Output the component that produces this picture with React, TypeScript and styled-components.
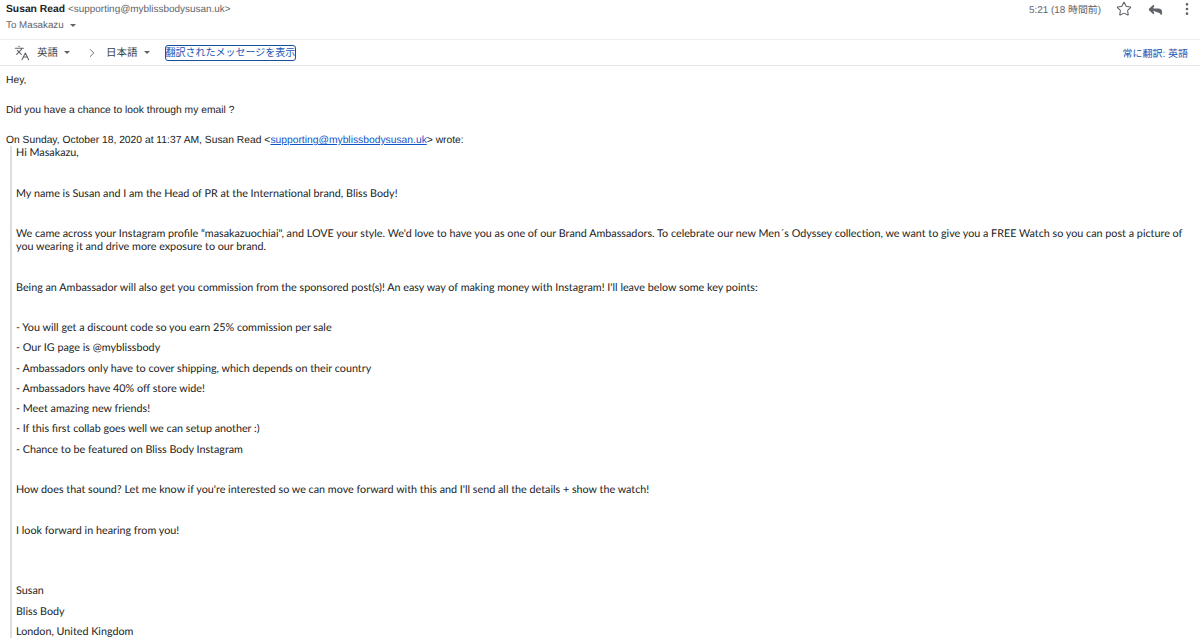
import styled, { createGlobalStyle } from 'styled-components';
import { Languages, ChevronRight, Star, Reply, MoreVertical } from 'lucide-react';

const GlobalStyle = createGlobalStyle`
  html, body {
    margin: 0;
    padding: 0;
    background: #fff;
    overflow: hidden;
    text-rendering: geometricPrecision;
  }
`;

const quoted = [
  'Hi Masakazu,',
  '',
  'My name is Susan and I am the Head of PR at the International brand, Bliss Body!',
  '',
  'We came across your Instagram profile “masakazuochiai", and LOVE your style. We\'d love to have you as one of our Brand Ambassadors. To celebrate our new Men´s Odyssey collection, we want to give you a FREE Watch so you can post a picture of you wearing it and drive more exposure to our brand.',
  '',
  "Being an Ambassador will also get you commission from the sponsored post(s)! An easy way of making money with Instagram! I'll leave below some key points:",
  '',
  '- You will get a discount code so you earn 25% commission per sale',
  '- Our IG page is @myblissbody',
  '- Ambassadors only have to cover shipping, which depends on their country',
  '- Ambassadors have 40% off store wide!',
  '- Meet amazing new friends!',
  '- If this first collab goes well we can setup another :)',
  '- Chance to be featured on Bliss Body Instagram',
  '',
  "How does that sound? Let me know if you're interested so we can move forward with this and I'll send all the details + show the watch!",
  '',
  'I look forward in hearing from you!',
  '',
  '',
  'Susan',
  'Bliss Body',
  'London, United Kingdom',
];

const App = () => {
  return (
    <Page>
      <GlobalStyle />
      <Header>
        <Sender>
          <NameRow>
            <Name>Susan Read</Name>
            <Address>&lt;supporting@myblissbodysusan.uk&gt;</Address>
          </NameRow>
          <ToRow>
            To Masakazu
            <Caret />
          </ToRow>
        </Sender>
        <Meta>
          <Time>5:21 (18 時間前)</Time>
          <Star size={16} strokeWidth={1.6} />
          <ReplyIcon size={17} strokeWidth={2.6} />
          <MoreVertical size={16} strokeWidth={2} />
        </Meta>
      </Header>
      <TranslateBar>
        <Languages size={16} strokeWidth={1.6} />
        <LangLabel>英語<Caret /></LangLabel>
        <ChevronRight size={14} strokeWidth={1.6} />
        <LangLabel>日本語<Caret /></LangLabel>
        <ShowButton>翻訳されたメッセージを表示</ShowButton>
        <AlwaysLink>常に翻訳: 英語</AlwaysLink>
      </TranslateBar>
      <Body>
        <Lead>Hey,</Lead>
        <Lead>Did you have a chance to look through my email ?</Lead>
        <Attribution>
          On Sunday, October 18, 2020 at 11:37 AM, Susan Read &lt;
          <MailLink>supporting@myblissbodysusan.uk</MailLink>
          &gt; wrote:
        </Attribution>
        <Quote>
          {quoted.map((line, idx) => (
            <Para key={idx}>{line || '\u00a0'}</Para>
          ))}
        </Quote>
      </Body>
    </Page>
  );
};

const Page = styled.div`
  width: 1200px;
  height: 641px;
  overflow: hidden;
  background: #fff;
  color: #222;
  font-family: "Liberation Sans", "Noto Sans CJK JP", sans-serif;
`;

const Header = styled.header`
  display: flex;
  justify-content: space-between;
  height: 39px;
  padding: 2px 5px 0 6px;
  box-sizing: border-box;
`;

const Sender = styled.div`
  display: flex;
  flex-direction: column;
  gap: 5px;
  margin-top: 2px;
`;

const NameRow = styled.div`
  display: flex;
  align-items: baseline;
  gap: 3px;
`;

const Name = styled.span`
  font-size: 10.3px;
  font-weight: 700;
  color: #202124;
`;

const Address = styled.span`
  font-size: 9.95px;
  color: #5f6368;
`;

const ToRow = styled.div`
  display: flex;
  align-items: center;
  gap: 6px;
  font-size: 9.8px;
  color: #5f6368;
`;

const Caret = styled.span`
  display: inline-block;
  width: 0;
  height: 0;
  border-left: 3px solid transparent;
  border-right: 3px solid transparent;
  border-top: 3.5px solid #5f6368;
`;

const Meta = styled.div`
  display: flex;
  align-items: flex-start;
  gap: 15px;
  margin-top: -1px;
  color: #5f6368;
`;

const Time = styled.span`
  font-size: 9.9px;
  margin-top: 1px;
`;

const ReplyIcon = styled(Reply)`
  fill: #5f6368;
`;

const TranslateBar = styled.div`
  display: flex;
  align-items: center;
  height: 27px;
  padding: 0 12px 0 14px;
  border-top: 1px solid #efefef;
  border-bottom: 1px solid #e8e8e8;
  box-sizing: border-box;
  color: #5f6368;
`;

const LangLabel = styled.span`
  display: inline-flex;
  align-items: center;
  gap: 6px;
  margin: 0 15px 0 7px;
  font-size: 10.5px;
  color: #3c4043;
`;

const ShowButton = styled.button`
  padding: 0;
  height: 16px;
  border: 1.5px solid #1a4f9c;
  border-radius: 3px;
  background: #fff;
  color: #1a55b5;
  font: inherit;
  font-size: 10px;
  line-height: 12px;
`;

const AlwaysLink = styled.span`
  margin-left: auto;
  font-size: 10px;
  color: #1a55b5;
`;

const Body = styled.main`
  padding: 8px 6px 0;
  font-size: 10.3px;
  line-height: 13px;
  color: #222;
`;

const Lead = styled.div`
  margin-bottom: 17px;
`;

const Attribution = styled.div`
  margin: 1px 0 -1px;
`;

const MailLink = styled.a`
  color: #1155cc;
  text-decoration: underline;
`;

const Quote = styled.blockquote`
  margin: 0 0 0 4px;
  padding-left: 4px;
  border-left: 2px solid #ddd;
  font-family: Lato, "Open Sans", sans-serif;
  font-size: 10.78px;
`;

const Para = styled.p`
  margin: 0 0 7.26px;
  line-height: 13px;
  color: #222;
`;

export default App;
